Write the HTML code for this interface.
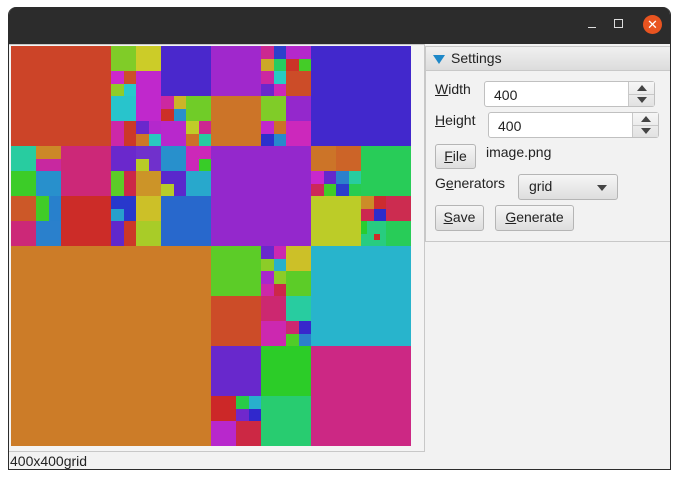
<!DOCTYPE html>
<html><head><meta charset="utf-8"><style>
*{margin:0;padding:0;box-sizing:border-box}
body{width:680px;height:479px;background:#fff;position:relative;overflow:hidden;font-family:"Liberation Sans","DejaVu Sans",sans-serif;font-size:14px;color:#222}
.win{position:absolute;left:8px;top:7px;width:663px;height:463px;background:#f2f2f2;border-radius:8px 8px 0 0;overflow:hidden;border-left:1px solid #2c2c2c;border-right:1px solid #2c2c2c;border-bottom:1px solid #2c2c2c}
.tb{position:absolute;left:0;top:0;width:100%;height:37px;background:#2c2c2c}
.g{position:absolute;left:11px;top:46px;width:400px;height:400px}
.g div{position:absolute}
.lbl{position:absolute;font-size:14px}
.u{text-decoration:underline}
.btn{position:absolute;border:1px solid #b5b5b5;border-radius:3px;background:linear-gradient(#f6f6f6,#dedede);font-size:14px;text-align:center;line-height:23px}
.spin{position:absolute;border:1px solid #c0c0c0;border-radius:3px;background:#fff;height:26px}
.spin span{position:absolute;left:9px;top:5px}
.arr{position:absolute;right:0;top:0;width:26px;height:24px;border-left:1px solid #c8c8c8;background:linear-gradient(#f6f6f6,#e2e2e2)}
.arr:after{content:"";position:absolute;left:0;right:0;top:12px;border-top:1px solid #c8c8c8}
.up,.dn{position:absolute;left:8px;width:0;height:0;border-left:5px solid transparent;border-right:5px solid transparent}
.up{top:3px;border-bottom:6px solid #444}
.dn{top:15px;border-top:6px solid #444}
</style></head><body>
<div class="win">
<div class="tb">
<div style="position:absolute;left:579px;top:20px;width:8px;height:1px;background:#ddd"></div>
<div style="position:absolute;left:605px;top:12px;width:9px;height:9px;border:1px solid #ddd"></div>
<div style="position:absolute;left:634px;top:8px;width:19px;height:19px;border-radius:50%;background:#e95420;color:#fff;font-size:13px;text-align:center;line-height:19px">✕</div>
</div>
<div style="position:absolute;left:0;top:37px;width:416px;height:408px;border:1px solid #c8c8c8;border-left:none;background:#f4f4f4"></div>
<div style="position:absolute;left:1px;top:446px;font-size:14px">400x400grid</div>
<div style="position:absolute;left:416px;top:39px;width:247px;height:196px;border:1px solid #c8c8c8;background:#f2f2f2"></div>
<div style="position:absolute;left:417px;top:40px;width:245px;height:24px;background:linear-gradient(#f0f0f0,#dcdcdc);border-bottom:1px solid #c8c8c8"></div>
</div>
<div style="position:absolute;left:433px;top:55px;width:0;height:0;border-left:6px solid transparent;border-right:6px solid transparent;border-top:9px solid #1e88c8"></div>
<div class="lbl" style="left:451px;top:50px">Settings</div>
<div class="lbl" style="left:435px;top:81px"><span class="u">W</span>idth</div>
<div class="spin" style="left:484px;top:81px;width:171px"><span>400</span><div class="arr"><div class="up"></div><div class="dn"></div></div></div>
<div class="lbl" style="left:435px;top:112px"><span class="u">H</span>eight</div>
<div class="spin" style="left:488px;top:112px;width:171px"><span>400</span><div class="arr"><div class="up"></div><div class="dn"></div></div></div>
<div class="btn" style="left:435px;top:144px;width:41px;height:25px"><span class="u">F</span>ile</div>
<div class="lbl" style="left:486px;top:144px">image.png</div>
<div class="lbl" style="left:435px;top:175px">G<span class="u">e</span>nerators</div>
<div class="btn" style="left:518px;top:174px;width:100px;height:26px;text-align:left;padding-left:10px">grid<div style="position:absolute;right:10px;top:10px;border-left:5px solid transparent;border-right:5px solid transparent;border-top:6px solid #444"></div></div>
<div class="btn" style="left:435px;top:205px;width:49px;height:26px"><span class="u">S</span>ave</div>
<div class="btn" style="left:495px;top:205px;width:79px;height:26px"><span class="u">G</span>enerate</div>

<div class="g">
<!-- TL quadrant -->
<div style="left:0;top:0;width:100px;height:100px;background:#cc4428"></div>
<div style="left:100px;top:0;width:25px;height:25px;background:#80cc28"></div>
<div style="left:125px;top:0;width:25px;height:25px;background:#cccc28"></div>
<div style="left:150px;top:0;width:50px;height:50px;background:#4a28cc"></div>
<div style="left:100px;top:25px;width:12.5px;height:12.5px;background:#cc28cc"></div>
<div style="left:112.5px;top:25px;width:12.5px;height:12.5px;background:#cc5028"></div>
<div style="left:100px;top:37.5px;width:12.5px;height:12.5px;background:#90cc28"></div>
<div style="left:112.5px;top:37.5px;width:12.5px;height:12.5px;background:#28c8cc"></div>
<div style="left:100px;top:50px;width:25px;height:25px;background:#28c4cc"></div>
<div style="left:125px;top:25px;width:25px;height:50px;background:#c028cc"></div>
<div style="left:150px;top:50px;width:12.5px;height:12.5px;background:#cc28a0"></div>
<div style="left:162.5px;top:50px;width:12.5px;height:12.5px;background:#ccb428"></div>
<div style="left:150px;top:62.5px;width:12.5px;height:12.5px;background:#cc3028"></div>
<div style="left:162.5px;top:62.5px;width:12.5px;height:12.5px;background:#2890cc"></div>
<div style="left:175px;top:50px;width:25px;height:25px;background:#70cc28"></div>
<div style="left:100px;top:75px;width:12.5px;height:25px;background:#cc28a8"></div>
<div style="left:112.5px;top:75px;width:12.5px;height:25px;background:#cc3828"></div>
<div style="left:125px;top:75px;width:12.5px;height:12.5px;background:#6a28cc"></div>
<div style="left:137.5px;top:75px;width:12.5px;height:12.5px;background:#b428cc"></div>
<div style="left:125px;top:87.5px;width:12.5px;height:12.5px;background:#cc7828"></div>
<div style="left:137.5px;top:87.5px;width:12.5px;height:12.5px;background:#28c8c0"></div>
<div style="left:150px;top:75px;width:25px;height:25px;background:#b828cc"></div>
<div style="left:175px;top:75px;width:12.5px;height:12.5px;background:#c0cc28"></div>
<div style="left:187.5px;top:75px;width:12.5px;height:12.5px;background:#cc2890"></div>
<div style="left:175px;top:87.5px;width:12.5px;height:12.5px;background:#cc7028"></div>
<div style="left:187.5px;top:87.5px;width:12.5px;height:12.5px;background:#28cca0"></div>
<div style="left:0;top:100px;width:25px;height:25px;background:#28cca0"></div>
<div style="left:25px;top:100px;width:25px;height:12.5px;background:#cc8828"></div>
<div style="left:25px;top:112.5px;width:25px;height:12.5px;background:#c828a0"></div>
<div style="left:0;top:125px;width:25px;height:25px;background:#3ccc28"></div>
<div style="left:25px;top:125px;width:25px;height:25px;background:#2890cc"></div>
<div style="left:50px;top:100px;width:50px;height:50px;background:#cc2878"></div>
<div style="left:0;top:150px;width:25px;height:25px;background:#cc5828"></div>
<div style="left:25px;top:150px;width:12.5px;height:25px;background:#40cc28"></div>
<div style="left:37.5px;top:150px;width:12.5px;height:25px;background:#2880cc"></div>
<div style="left:50px;top:150px;width:50px;height:50px;background:#cc2c28"></div>
<div style="left:0;top:175px;width:25px;height:25px;background:#cc2878"></div>
<div style="left:25px;top:175px;width:25px;height:25px;background:#2a80cc"></div>
<div style="left:100px;top:100px;width:25px;height:25px;background:#6a28cc"></div>
<div style="left:125px;top:100px;width:25px;height:25px;background:#7030cc"></div>
<div style="left:125px;top:112.5px;width:12.5px;height:12.5px;background:#b8cc28"></div>
<div style="left:150px;top:100px;width:25px;height:25px;background:#2890cc"></div>
<div style="left:175px;top:100px;width:25px;height:25px;background:#cc28b8"></div>
<div style="left:187.5px;top:112.5px;width:12.5px;height:12.5px;background:#38cc28"></div>
<div style="left:100px;top:125px;width:12.5px;height:25px;background:#5ccc28"></div>
<div style="left:112.5px;top:125px;width:12.5px;height:25px;background:#cc2848"></div>
<div style="left:125px;top:125px;width:25px;height:25px;background:#cc9428"></div>
<div style="left:150px;top:125px;width:25px;height:25px;background:#5a28cc"></div>
<div style="left:150px;top:137.5px;width:12.5px;height:12.5px;background:#b8cc28"></div>
<div style="left:175px;top:125px;width:25px;height:25px;background:#28a8cc"></div>
<div style="left:100px;top:150px;width:25px;height:25px;background:#2838cc"></div>
<div style="left:100px;top:162.5px;width:12.5px;height:12.5px;background:#28a0cc"></div>
<div style="left:125px;top:150px;width:25px;height:25px;background:#ccc028"></div>
<div style="left:100px;top:175px;width:12.5px;height:25px;background:#6028cc"></div>
<div style="left:112.5px;top:175px;width:12.5px;height:25px;background:#cc3828"></div>
<div style="left:125px;top:175px;width:25px;height:25px;background:#a8cc28"></div>
<div style="left:150px;top:150px;width:50px;height:50px;background:#2868cc"></div>
<!-- TR quadrant -->
<div style="left:200px;top:0;width:50px;height:50px;background:#a028cc"></div>
<div style="left:250px;top:0;width:12.5px;height:12.5px;background:#cc2890"></div>
<div style="left:262.5px;top:0;width:12.5px;height:12.5px;background:#2c40cc"></div>
<div style="left:250px;top:12.5px;width:12.5px;height:12.5px;background:#cca828"></div>
<div style="left:262.5px;top:12.5px;width:12.5px;height:12.5px;background:#28cc60"></div>
<div style="left:275px;top:0;width:25px;height:12.5px;background:#b428cc"></div>
<div style="left:275px;top:12.5px;width:12.5px;height:12.5px;background:#cc3428"></div>
<div style="left:287.5px;top:12.5px;width:12.5px;height:12.5px;background:#44cc28"></div>
<div style="left:250px;top:25px;width:12.5px;height:12.5px;background:#cc28a0"></div>
<div style="left:262.5px;top:25px;width:12.5px;height:12.5px;background:#28ccc4"></div>
<div style="left:250px;top:37.5px;width:12.5px;height:12.5px;background:#6a28cc"></div>
<div style="left:262.5px;top:37.5px;width:12.5px;height:12.5px;background:#cc28b8"></div>
<div style="left:275px;top:25px;width:25px;height:25px;background:#cc4c28"></div>
<div style="left:300px;top:0;width:100px;height:100px;background:#4228cc"></div>
<div style="left:200px;top:50px;width:50px;height:50px;background:#cc7428"></div>
<div style="left:250px;top:50px;width:25px;height:25px;background:#80cc28"></div>
<div style="left:275px;top:50px;width:25px;height:25px;background:#9428cc"></div>
<div style="left:250px;top:75px;width:12.5px;height:12.5px;background:#c028cc"></div>
<div style="left:262.5px;top:75px;width:12.5px;height:12.5px;background:#cc7028"></div>
<div style="left:250px;top:87.5px;width:12.5px;height:12.5px;background:#2c30cc"></div>
<div style="left:262.5px;top:87.5px;width:12.5px;height:12.5px;background:#2888cc"></div>
<div style="left:275px;top:75px;width:25px;height:25px;background:#cc28bc"></div>
<div style="left:200px;top:100px;width:100px;height:100px;background:#9428cc"></div>
<div style="left:300px;top:100px;width:25px;height:25px;background:#cc7428"></div>
<div style="left:325px;top:100px;width:25px;height:25px;background:#cc6428"></div>
<div style="left:350px;top:100px;width:50px;height:50px;background:#28cc58"></div>
<div style="left:300px;top:125px;width:12.5px;height:12.5px;background:#c828cc"></div>
<div style="left:312.5px;top:125px;width:12.5px;height:12.5px;background:#6428cc"></div>
<div style="left:300px;top:137.5px;width:12.5px;height:12.5px;background:#cc2858"></div>
<div style="left:312.5px;top:137.5px;width:12.5px;height:12.5px;background:#40cc28"></div>
<div style="left:325px;top:125px;width:12.5px;height:12.5px;background:#2c80cc"></div>
<div style="left:337.5px;top:125px;width:12.5px;height:12.5px;background:#28cca0"></div>
<div style="left:325px;top:137.5px;width:12.5px;height:12.5px;background:#2c3ccc"></div>
<div style="left:337.5px;top:137.5px;width:12.5px;height:12.5px;background:#28cc50"></div>
<div style="left:300px;top:150px;width:50px;height:50px;background:#bccc28"></div>
<div style="left:350px;top:150px;width:12.5px;height:12.5px;background:#cc8c28"></div>
<div style="left:362.5px;top:150px;width:12.5px;height:12.5px;background:#cc2c30"></div>
<div style="left:350px;top:162.5px;width:12.5px;height:12.5px;background:#cc2850"></div>
<div style="left:362.5px;top:162.5px;width:12.5px;height:12.5px;background:#2c2ccc"></div>
<div style="left:375px;top:150px;width:25px;height:25px;background:#cc2c50"></div>
<div style="left:350px;top:175px;width:25px;height:25px;background:#28cc80"></div>
<div style="left:350px;top:175px;width:6px;height:12.5px;background:#28cc30"></div>
<div style="left:362.5px;top:187.5px;width:6px;height:6px;background:#cc2c28"></div>
<div style="left:375px;top:175px;width:25px;height:25px;background:#28cc58"></div>
<!-- BL -->
<div style="left:0;top:200px;width:200px;height:200px;background:#cc7c28"></div>
<!-- BR -->
<div style="left:200px;top:200px;width:50px;height:50px;background:#5ccc28"></div>
<div style="left:250px;top:200px;width:12.5px;height:12.5px;background:#6a28cc"></div>
<div style="left:262.5px;top:200px;width:12.5px;height:12.5px;background:#cc28b0"></div>
<div style="left:250px;top:212.5px;width:12.5px;height:12.5px;background:#8ccc28"></div>
<div style="left:262.5px;top:212.5px;width:12.5px;height:12.5px;background:#28b0cc"></div>
<div style="left:275px;top:200px;width:25px;height:25px;background:#ccc028"></div>
<div style="left:250px;top:225px;width:12.5px;height:12.5px;background:#a828cc"></div>
<div style="left:262.5px;top:225px;width:12.5px;height:12.5px;background:#8ccc28"></div>
<div style="left:250px;top:237.5px;width:12.5px;height:12.5px;background:#cc28a8"></div>
<div style="left:262.5px;top:237.5px;width:12.5px;height:12.5px;background:#cc2848"></div>
<div style="left:275px;top:225px;width:25px;height:25px;background:#5ccc28"></div>
<div style="left:300px;top:200px;width:100px;height:100px;background:#28b4cc"></div>
<div style="left:200px;top:250px;width:50px;height:50px;background:#cc4c28"></div>
<div style="left:250px;top:250px;width:25px;height:25px;background:#cc2870"></div>
<div style="left:275px;top:250px;width:25px;height:25px;background:#28cca0"></div>
<div style="left:250px;top:275px;width:25px;height:25px;background:#cc28b0"></div>
<div style="left:275px;top:275px;width:12.5px;height:12.5px;background:#cc2870"></div>
<div style="left:287.5px;top:275px;width:12.5px;height:12.5px;background:#3828cc"></div>
<div style="left:275px;top:287.5px;width:12.5px;height:12.5px;background:#50cc28"></div>
<div style="left:287.5px;top:287.5px;width:12.5px;height:12.5px;background:#2c80cc"></div>
<div style="left:200px;top:300px;width:50px;height:50px;background:#6828cc"></div>
<div style="left:250px;top:300px;width:50px;height:50px;background:#2ccc28"></div>
<div style="left:300px;top:300px;width:100px;height:100px;background:#cc2884"></div>
<div style="left:200px;top:350px;width:25px;height:25px;background:#cc2828"></div>
<div style="left:225px;top:350px;width:12.5px;height:12.5px;background:#28cc48"></div>
<div style="left:237.5px;top:350px;width:12.5px;height:12.5px;background:#28b0cc"></div>
<div style="left:225px;top:362.5px;width:12.5px;height:12.5px;background:#7028cc"></div>
<div style="left:237.5px;top:362.5px;width:12.5px;height:12.5px;background:#3028cc"></div>
<div style="left:200px;top:375px;width:25px;height:25px;background:#b828cc"></div>
<div style="left:225px;top:375px;width:25px;height:25px;background:#cc2844"></div>
<div style="left:250px;top:350px;width:50px;height:50px;background:#28cc70"></div>
</div>
</body></html>
